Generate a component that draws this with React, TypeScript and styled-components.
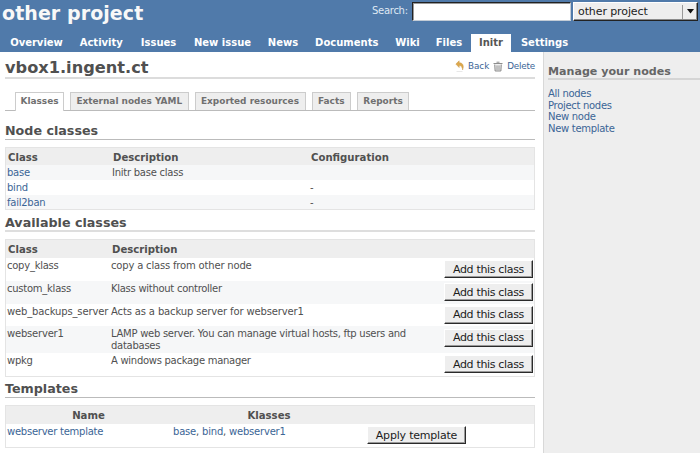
import React from 'react';
import styled, { createGlobalStyle } from 'styled-components';

const GlobalStyle = createGlobalStyle`
  * { box-sizing: border-box; }
  body {
    margin: 0;
    background: #fff;
    color: #505050;
    font-family: "DejaVu Sans", Verdana, sans-serif;
    font-size: 10px;
    line-height: 12px;
    overflow: hidden;
  }
  a { color: #3b6596; text-decoration: none; }
`;

const Page = styled.div`
  width: 700px;
  height: 453px;
  display: flex;
  flex-direction: column;
`;

const Header = styled.header`
  height: 52px;
  flex: none;
  background: #507aaa;
  display: flex;
  flex-direction: column;
  justify-content: space-between;
`;

const HeaderTop = styled.div`
  display: flex;
  height: 26px;
`;

const ProjectTitle = styled.h1`
  margin: 0;
  padding: 1px 0 0 2px;
  flex: 1;
  font-size: 19px;
  letter-spacing: 0.08px;
  line-height: 24px;
  color: #f8f8f8;
`;

const QuickSearch = styled.div`
  display: flex;
  align-items: flex-start;
  padding-top: 2px;
`;

const SearchLabel = styled.label`
  color: #dfe8f3;
  font-size: 10px;
  letter-spacing: -0.28px;
  line-height: 18px;
  width: 40px;
`;

const SearchInput = styled.input`
  width: 159px;
  height: 19px;
  padding: 0 2px;
  background: #fff;
  border: 1px solid;
  border-color: #222 #c4ccd6 #c4ccd6 #222;
  box-shadow: inset 1px 1px 0 #999;
`;

const ProjectSelect = styled.div`
  display: flex;
  align-items: center;
  width: 125px;
  height: 19px;
  margin: 0 2px 0 2px;
  padding-left: 4px;
  background: #eee;
  border: 1px solid;
  border-color: #fff #222 #222 #fff;
  box-shadow: inset -1px -1px 0 #8b8b8b;
  font-size: 11px;
  letter-spacing: -0.1px;
  color: #1c1c1c;
`;

const SelectArrow = styled.span`
  display: flex;
  align-items: center;
  justify-content: center;
  width: 15px;
  height: 14px;
  margin-left: auto;
  border-left: 1px solid #999;
`;

const MainMenu = styled.nav`
  display: flex;
  gap: 2px;
  padding-left: 3px;
`;

const MenuItem = styled.a<{ $active?: boolean; $w: number }>`
  width: ${p => p.$w}px;
  height: 18px;
  text-align: center;
  white-space: nowrap;
  font-weight: bold;
  font-size: 10px;
  line-height: 18px;
  color: ${p => (p.$active ? '#555' : '#fff')};
  background: ${p => (p.$active ? '#fff' : 'transparent')};
`;

const Body = styled.div`
  flex: 1;
  display: flex;
  min-height: 0;
`;

const Content = styled.main`
  width: 543px;
  padding: 0 8px 0 5px;
  display: flex;
  flex-direction: column;
`;

const Sidebar = styled.aside`
  flex: 1;
  background: #eee;
  border-left: 1px solid #d8d8d8;
  padding: 12px 0 0 4px;
`;

const SidebarTitle = styled.h3`
  margin: 0 0 8px;
  box-sizing: content-box;
  height: 14px;
  font-size: 11.1px;
  line-height: 15px;
  color: #666;
  border-bottom: 2px solid #d5d5d5;
`;

const SidebarLink = styled.a`
  display: block;
  line-height: 11.7px;
  letter-spacing: -0.3px;
`;

const NodeHead = styled.div`
  display: flex;
  justify-content: space-between;
  height: 27px;
  flex: none;
  border-bottom: 2px solid #dcdcdc;
`;

const NodeTitle = styled.h2`
  margin: 0;
  font-size: 16.2px;
  line-height: 31px;
`;

const Contextual = styled.div`
  display: flex;
  align-items: center;
  height: 28px;
  font-size: 8.8px;
`;

const ActionLink = styled.a<{ $gap: number; $track?: number }>`
  display: flex;
  align-items: center;
  gap: ${p => p.$gap}px;
  margin-left: 4px;
  letter-spacing: ${p => p.$track ?? 0}px;
`;

const Tabs = styled.div`
  display: flex;
  gap: 6px;
  margin-top: 13px;
  padding-left: 10px;
  height: 19px;
  flex: none;
  border-bottom: 1px solid #bbb;
`;

const Tab = styled.a<{ $active?: boolean; $w: number }>`
  width: ${p => p.$w}px;
  height: ${p => (p.$active ? 19 : 18)}px;
  text-align: center;
  white-space: nowrap;
  font-weight: bold;
  font-size: 8.95px;
  line-height: 17px;
  color: #707070;
  background: ${p => (p.$active ? '#fff' : '#eee')};
  border: 1px solid #ccc;
  border-bottom: none;
`;

const SectionTitle = styled.h3<{ $top: number; $soft?: boolean }>`
  margin: ${p => p.$top}px 0 7px;
  height: 17px;
  flex: none;
  font-size: 12.7px;
  line-height: 15px;
  border-bottom: ${p => (p.$soft ? '2px solid #dedede' : '1px solid #bbb')};
`;

const List = styled.div`
  border: 1px solid #e4e4e4;
  flex: none;
`;

const Row = styled.div<{ $cols: string; $h: number; $odd?: boolean }>`
  display: grid;
  grid-template-columns: ${p => p.$cols};
  height: ${p => p.$h}px;
  background: ${p => (p.$odd ? '#f6f7f8' : '#fff')};
`;

const Cell = styled.div<{ $pad?: number; $track?: number }>`
  padding-left: ${p => p.$pad ?? 1}px;
  padding-top: 2px;
  letter-spacing: ${p => p.$track ?? -0.25}px;
  white-space: nowrap;
`;

const HeadRow = styled(Row)`
  background: #eee;
  font-weight: bold;
  font-size: 10.15px;
  line-height: 18px;
`;

const HeadCell = styled.div<{ $center?: boolean }>`
  padding: 1px 0 0 ${p => (p.$center ? 0 : 2)}px;
  text-align: ${p => (p.$center ? 'center' : 'left')};
`;

const Button = styled.button<{ $w: number; $track: number }>`
  width: ${p => p.$w}px;
  height: 18px;
  margin: 2.4px 0 0;
  padding: 0;
  background: #eee;
  border: 1px solid;
  border-color: #fff #2a2a2a #2a2a2a #fff;
  box-shadow: inset -1px -1px 0 #999;
  font-family: inherit;
  font-size: 11px;
  letter-spacing: ${p => p.$track}px;
  line-height: 15px;
  color: #1c1c1c;
`;

const menu = [
  { label: 'Overview', w: 67 },
  { label: 'Activity', w: 58.5 },
  { label: 'Issues', w: 52 },
  { label: 'New issue', w: 72 },
  { label: 'News', w: 45 },
  { label: 'Documents', w: 78.5 },
  { label: 'Wiki', w: 39 },
  { label: 'Files', w: 40 },
  { label: 'Initr', w: 40, active: true },
  { label: 'Settings', w: 63 },
];

const tabs = [
  { label: 'Klasses', w: 49, active: true },
  { label: 'External nodes YAML', w: 118.5 },
  { label: 'Exported resources', w: 111 },
  { label: 'Facts', w: 39.5 },
  { label: 'Reports', w: 52 },
];

const nodeClasses = [
  { name: 'base', description: 'Initr base class', config: '', h: 15 },
  { name: 'bind', description: '', config: '-', h: 15 },
  { name: 'fail2ban', description: '', config: '-', h: 14 },
];

const available = [
  { name: 'copy_klass', description: ['copy a class from other node'], h: 22.8, textTrack: -0.18 },
  { name: 'custom_klass', description: ['Klass without controller'], h: 22.8, textTrack: -0.28 },
  { name: 'web_backups_server', description: ['Acts as a backup server for webserver1'], h: 22.8, track: -0.14, textTrack: -0.14 },
  { name: 'webserver1', description: ['LAMP web server. You can manage virtual hosts, ftp users and', 'databases'], h: 26.6, track: -0.2, textTrack: -0.27 },
  { name: 'wpkg', description: ['A windows package manager'], h: 23, textTrack: -0.28 },
];

const nodeCols = '105px 198px 1fr';
const availableCols = '104px 334px 1fr';
const templateCols = '165px 196px 1fr';

const BackIcon = () => (
  <svg width="10" height="13" viewBox="0 0 10 13">
    <path d="M.8 4 4.200.8v2C7.600 2.800 9.400 5.400 7.600 10 7.400 7.400 6.400 5.700 4.200 5.600v2z" fill="#dca84c" stroke="#c4913c" strokeWidth=".4" />
    <path d="M1.500 11.500h6" stroke="#e8e8e8" />
  </svg>
);

const TrashIcon = () => (
  <svg width="10" height="11" viewBox="0 0 10 11" fill="none" stroke="#8d8d8d">
    <path d="M.5 2.500h9M3.500 1.200h3" />
    <path d="M1.700 3.500 2.100 10h5.800l.4-6.500" fill="#e4e4e4" />
    <path d="M4 4.500V9M6 4.500V9" strokeWidth=".8" />
  </svg>
);

export default function App() {
  return (
    <Page>
      <GlobalStyle />
      <Header>
        <HeaderTop>
          <ProjectTitle>other project</ProjectTitle>
          <QuickSearch>
            <SearchLabel>Search:</SearchLabel>
            <SearchInput aria-label="Search" />
            <ProjectSelect>
              other project
              <SelectArrow>
                <svg width="7" height="5" viewBox="0 0 7 5"><path d="M0 0h7L3.500 4.500z" fill="#111" /></svg>
              </SelectArrow>
            </ProjectSelect>
          </QuickSearch>
        </HeaderTop>
        <MainMenu>
          {menu.map(m => (
            <MenuItem key={m.label} $w={m.w} $active={m.active}>{m.label}</MenuItem>
          ))}
        </MainMenu>
      </Header>
      <Body>
        <Content>
          <NodeHead>
            <NodeTitle>vbox1.ingent.ct</NodeTitle>
            <Contextual>
              <ActionLink $gap={3}><BackIcon />Back</ActionLink>
              <ActionLink $gap={4} $track={-0.2}><TrashIcon />Delete</ActionLink>
            </Contextual>
          </NodeHead>
          <Tabs>
            {tabs.map(t => (
              <Tab key={t.label} $w={t.w} $active={t.active}>{t.label}</Tab>
            ))}
          </Tabs>

          <SectionTitle $top={12}>Node classes</SectionTitle>
          <List>
            <HeadRow $cols={nodeCols} $h={17}>
              <HeadCell>Class</HeadCell>
              <HeadCell>Description</HeadCell>
              <HeadCell>Configuration</HeadCell>
            </HeadRow>
            {nodeClasses.map((c, i) => (
              <Row key={c.name} $cols={nodeCols} $h={c.h} $odd={i % 2 === 0}>
                <Cell>
                  <a>{c.name}</a>
                </Cell>
                <Cell>{c.description}</Cell>
                <Cell>{c.config}</Cell>
              </Row>
            ))}
          </List>

          <SectionTitle $top={5} $soft>Available classes</SectionTitle>
          <List>
            <HeadRow $cols={availableCols} $h={18}>
              <HeadCell>Class</HeadCell>
              <HeadCell>Description</HeadCell>
            </HeadRow>
            {available.map((c, i) => (
              <Row key={c.name} $cols={availableCols} $h={c.h} $odd={i % 2 === 1}>
                <Cell $track={c.track}>{c.name}</Cell>
                <Cell $track={c.textTrack}>{c.description.map(d => <div key={d}>{d}</div>)}</Cell>
                <Button $w={89} $track={-0.33}>Add this class</Button>
              </Row>
            ))}
          </List>

          <SectionTitle $top={4}>Templates</SectionTitle>
          <List>
            <HeadRow $cols={templateCols} $h={18}>
              <HeadCell $center>Name</HeadCell>
              <HeadCell $center>Klasses</HeadCell>
            </HeadRow>
            <Row $cols={templateCols} $h={23}>
              <Cell><a>webserver template</a></Cell>
              <Cell $pad={2} $track={-0.2}><a>base</a>, <a>bind</a>, <a>webserver1</a></Cell>
              <Button $w={99} $track={-0.2}>Apply template</Button>
            </Row>
          </List>
        </Content>
        <Sidebar>
          <SidebarTitle>Manage your nodes</SidebarTitle>
          <SidebarLink>All nodes</SidebarLink>
          <SidebarLink>Project nodes</SidebarLink>
          <SidebarLink>New node</SidebarLink>
          <SidebarLink>New template</SidebarLink>
        </Sidebar>
      </Body>
    </Page>
  );
}
